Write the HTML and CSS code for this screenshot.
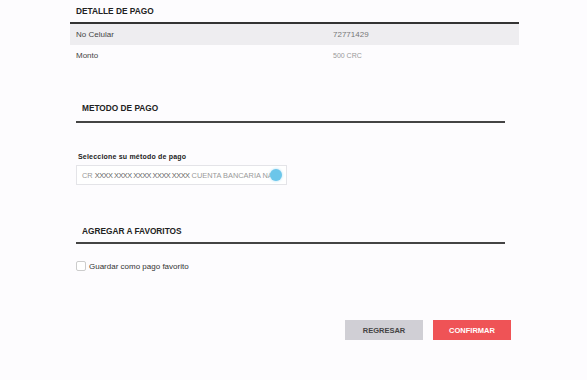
FILE: index.html
```html
<!DOCTYPE html>
<html lang="es">
<head>
  <meta charset="UTF-8" />
  <title>Detalle de pago</title>
  <link rel="stylesheet" href="styles.css">
</head>
<body>
  <div class="page">
    <div class="detail">
      <div class="detail-title">DETALLE DE PAGO</div>
      <div class="detail-row shaded"><span class="key">No Celular</span><span class="val">72771429</span></div>
      <div class="detail-row"><span class="key">Monto</span><span class="val small">500 CRC</span></div>
    </div>

    <div class="section">
      <div class="section-title">METODO DE PAGO</div>
      <div class="field-label">Seleccione su método de pago</div>
      <div class="select-box">
        <span class="opt">CR <span class="mask">XXXX XXXX XXXX XXXX XXXX</span> CUENTA BANCARIA NAF</span>
        <span class="dot"></span>
      </div>
    </div>

    <div class="section fav">
      <div class="section-title">AGREGAR A FAVORITOS</div>
      <label class="check"><span class="box"></span>Guardar como pago favorito</label>
    </div>

    <div class="actions">
      <button class="btn back">REGRESAR</button>
      <button class="btn confirm">CONFIRMAR</button>
    </div>
  </div>
</body>
</html>
```

FILE: styles.css
```css
* {
  box-sizing: border-box;
}

body {
  margin: 0;
  background: #fdfcfe;
  font-family: "Liberation Sans", Arial, sans-serif;
  color: #222;
}

.page {
  width: 449px;
  margin-left: 70px;
}

.detail-title {
  font-size: 8.3px;
  font-weight: bold;
  padding: 6px 0 0 6px;
  height: 24px;
  border-bottom: 2px solid #333;
}

.detail-row {
  display: flex;
  height: 21px;
  align-items: center;
  font-size: 8px;
  padding-left: 6px;
  color: #444;
}

.detail-row.shaded {
  background: #eeedf0;
}

.key {
  width: 257px;
}

.val {
  color: #777;
}

.val.small {
  font-size: 7px;
  color: #999;
}

.section {
  margin: 0 14px 0 6px;
  padding-top: 37px;
}

.section-title {
  font-size: 8.3px;
  font-weight: bold;
  padding: 0 0 8px 6px;
  border-bottom: 2px solid #444;
}

.field-label {
  font-size: 7px;
  font-weight: bold;
  margin: 30px 0 5px 2px;
  letter-spacing: 0.2px;
}

.select-box {
  width: 211px;
  height: 20px;
  border: 1px solid #e4e4e8;
  display: flex;
  align-items: center;
  padding-left: 5px;
  position: relative;
  overflow: hidden;
  background: #fff;
}

.opt {
  font-size: 7.4px;
  color: #999;
  white-space: nowrap;
}

.mask {
  color: #666;
  letter-spacing: -0.5px;
}

.dot {
  position: absolute;
  right: 4px;
  top: 3px;
  width: 12px;
  height: 12px;
  border-radius: 50%;
  background: #6cc6ea;
  box-shadow: 0 0 3px #a6dcf2;
}

.section.fav {
  padding-top: 41px;
}

.section.fav .section-title {
  padding-bottom: 6px;
}

.check {
  display: flex;
  align-items: center;
  font-size: 8px;
  color: #333;
  margin-top: 17px;
}

.box {
  width: 10px;
  height: 10px;
  border: 1px solid #ccc;
  border-radius: 2px;
  margin-right: 3px;
  background: #fff;
}

.actions {
  display: flex;
  justify-content: flex-end;
  gap: 10px;
  margin-top: 49px;
  padding-right: 8px;
}

.btn {
  width: 78px;
  height: 20px;
  border: none;
  font-family: "Liberation Sans", Arial, sans-serif;
  font-size: 7.5px;
  font-weight: bold;
}

.btn.back {
  background: #d0cfd5;
  color: #444;
}

.btn.confirm {
  background: #ef5356;
  color: #fff;
}
```
